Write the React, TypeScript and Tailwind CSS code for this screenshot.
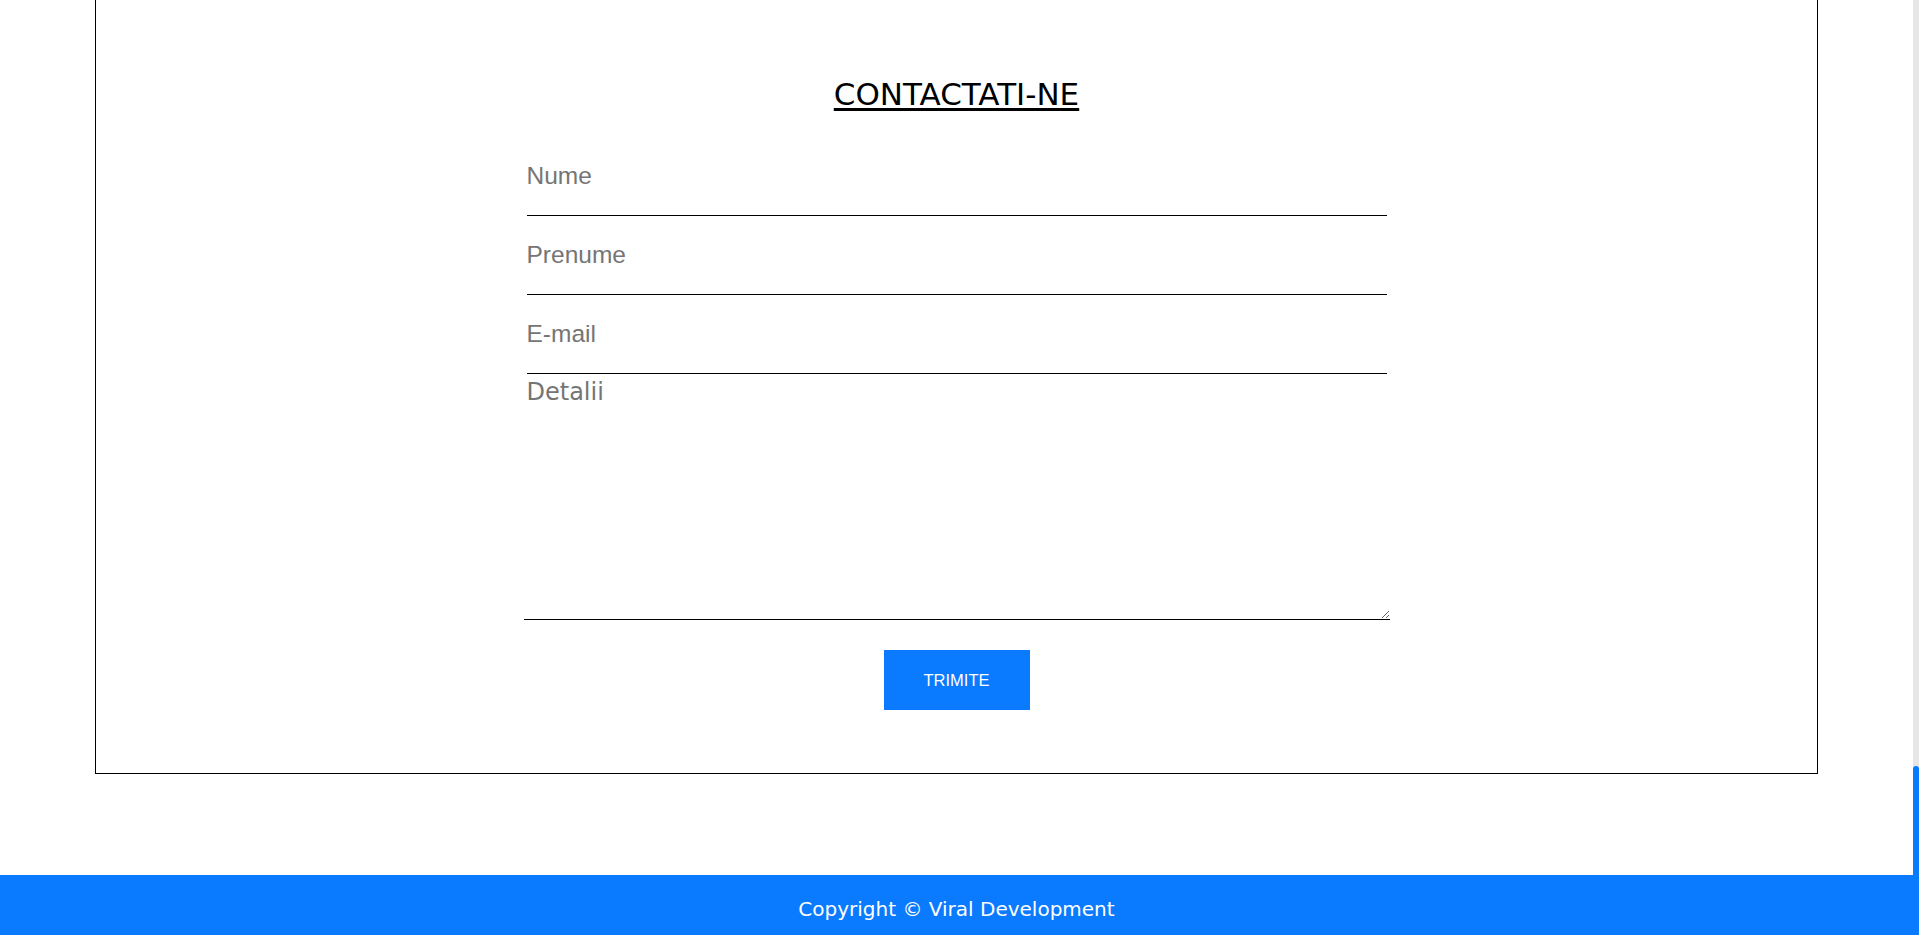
import React from "react";

const fields = ["Nume", "Prenume", "E-mail"];

export default function App() {
  return (
    <div className="flex h-[935px] overflow-hidden bg-white">
      <div className="flex min-w-0 flex-1 flex-col justify-end">

        {/* CONTACT BOX */}
        <section className="mx-[95px] shrink-0 border border-black pt-[300px] pb-[63px]">
          <h2 className="text-center font-['DejaVu_Sans',sans-serif] text-[31px] leading-[34px] text-black underline underline-offset-[3px]">
            CONTACTATI-NE
          </h2>

          <form className="mt-[26px] flex flex-col items-center" onSubmit={(e) => e.preventDefault()}>
            {fields.map((f) => (
              <input
                key={f}
                type={f === "E-mail" ? "email" : "text"}
                placeholder={f}
                className="h-[79px] w-[860px] border-b border-black bg-transparent px-0 font-['Liberation_Sans',Arial,sans-serif] text-[24.5px] text-black outline-none placeholder:text-[#757575]"
              />
            ))}
            <textarea
              placeholder="Detalii"
              className="h-[246px] w-[866px] border-b border-black bg-transparent px-[3px] pt-[2px] font-['DejaVu_Sans',sans-serif] text-[24px] leading-[33px] text-black outline-none placeholder:text-[#757575]"
            />
            <button
              type="submit"
              className="mt-[30px] h-[60px] w-[146px] bg-[#0a7aff] font-['Liberation_Sans',Arial,sans-serif] text-[16.5px] text-white"
            >
              TRIMITE
            </button>
          </form>
        </section>

        {/* FOOTER */}
        <footer className="mt-[101px] flex h-[60px] shrink-0 items-center justify-center bg-[#0a7aff] pt-[7px]">
          <p className="font-['DejaVu_Sans',sans-serif] text-[20px] text-white">
            Copyright © Viral Development
          </p>
        </footer>
      </div>

      {/* scrollbar */}
      <div className="flex w-[6px] shrink-0 flex-col justify-end bg-[#e6e6e6]">
        <div className="h-[169px] rounded-t-[3px] bg-[#0a7aff]" />
      </div>
    </div>
  );
}
